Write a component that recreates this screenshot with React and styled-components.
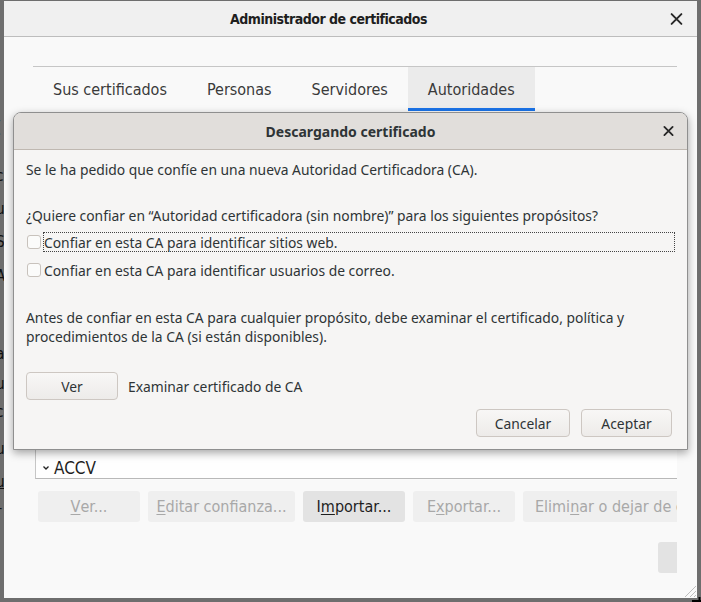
import React from 'react';
import styled, { createGlobalStyle } from 'styled-components';

const GlobalStyle = createGlobalStyle`
  html, body {
    margin: 0;
    padding: 0;
    background: #6e6e6e;
    width: 701px;
    height: 602px;
    overflow: hidden;
  }
`;

const Desktop = styled.div`
  position: relative;
  width: 701px;
  height: 602px;
  padding: 1px 4px 4px 4px;
  box-sizing: border-box;
  font-family: "DejaVu Sans", "Noto Sans", sans-serif;
  font-stretch: condensed;
`;

/* fragments of the dimmed window behind */
const Backdrop = styled.div`
  position: absolute;
  left: -4px;
  top: 0;
  width: 12px;
  color: #111;
  font-size: 15px;
`;

const Fragment = styled.span`
  position: absolute;
  left: 0;
  top: ${(p) => p.$y}px;
  text-decoration: ${(p) => (p.$u ? 'underline' : 'none')};
`;

const Window = styled.div`
  position: relative;
  width: 100%;
  height: 100%;
  background: #f9f9f9;
  display: flex;
  flex-direction: column;
  overflow: hidden;
`;

const TitleBar = styled.div`
  height: 35px;
  flex: none;
  padding-right: 44px;
  background: #f0f0f0;
  border-bottom: 1px solid #bdbdbd;
  display: flex;
  align-items: center;
  justify-content: center;
  position: relative;
  color: #1e1e1e;
  font-weight: bold;
  font-size: 14px;
  letter-spacing: -0.5px;
`;

const CloseButton = styled.div`
  position: absolute;
  right: ${(p) => p.$right}px;
  top: 50%;
  transform: translateY(-50%);
  display: flex;
`;

const Content = styled.div`
  flex: 1;
  margin: 29px 20px 0 29px;
  overflow: hidden;
  display: flex;
  flex-direction: column;
`;

const TabStrip = styled.div`
  display: flex;
  border-top: 1px solid #c6c6c6;
  height: 44px;
  flex: none;
`;

const Tab = styled.div`
  padding: 0 20px;
  display: flex;
  align-items: center;
  font-size: 16px;
  color: #3a3a3a;
  background: ${(p) => (p.$active ? '#ebebeb' : 'transparent')};
  box-shadow: ${(p) => (p.$active ? 'inset 0 -3px 0 #1a73e8' : 'none')};
`;

const Panel = styled.div`
  display: flex;
  flex-direction: column;
  width: 700px;
`;

const TreeBox = styled.div`
  margin: 10px 0 0 2px;
  height: 357px;
  background: #fefefe;
  border-left: 1px solid #c6c6c6;
  border-bottom: 1px solid #b8b8b8;
  display: flex;
  flex-direction: column;
  justify-content: flex-end;
`;

const TreeRow = styled.div`
  display: flex;
  align-items: center;
  height: 20px;
  padding-left: 6px;
  gap: 4px;
  font-size: 17px;
  color: #1e1e1e;
`;

const ActionRow = styled.div`
  display: flex;
  gap: 8px;
  margin: 12px 0 0 5px;
`;

const ActionButton = styled.div`
  flex: none;
  width: ${(p) => (p.$w ? `${p.$w}px` : 'auto')};
  padding: ${(p) => (p.$w ? '0' : '0 12px')};
  height: 31px;
  border-radius: 3px;
  display: flex;
  align-items: center;
  justify-content: center;
  font-size: 16px;
  white-space: nowrap;
  background: ${(p) => (p.$disabled ? '#efefef' : '#e3e3e3')};
  color: ${(p) => (p.$disabled ? '#a8a8a8' : '#1e1e1e')};

  u {
    text-underline-offset: 2px;
  }
`;

const BottomRow = styled.div`
  display: flex;
  margin: 20px 0 0 625px;
`;

const Grip = styled.div`
  position: absolute;
  right: 0;
  bottom: 0;
  display: flex;
`;

const Cursor = styled.div`
  position: absolute;
  right: 0;
  bottom: 0;
  display: flex;
`;

/* modal dialog */
const Dialog = styled.div`
  position: absolute;
  left: 9px;
  top: 111px;
  width: 675px;
  height: 338px;
  box-sizing: border-box;
  border: 1px solid #8f8f8f;
  border-radius: 8px 8px 0 0;
  background: #f6f5f4;
  box-shadow: 0 3px 9px rgba(0, 0, 0, 0.35);
  font-family: "Noto Sans", sans-serif;
  font-stretch: normal;
  color: #2e3436;
  font-size: 13.85px;
  display: flex;
  flex-direction: column;
  overflow: hidden;
`;

const DialogHeader = styled.div`
  height: 36px;
  flex: none;
  background: #e1dedb;
  border-bottom: 1px solid #bfb8b1;
  display: flex;
  align-items: center;
  justify-content: center;
  position: relative;
  font-weight: bold;
  font-size: 14px;
`;

const DialogBody = styled.div`
  padding: 10px 12px 0 12px;
  display: flex;
  flex-direction: column;
  line-height: 19px;
`;

const Text = styled.div`
  margin-top: ${(p) => p.$mt || 0}px;
`;

const CheckRow = styled.div`
  display: flex;
  align-items: center;
  height: 20px;
  margin-top: ${(p) => p.$mt}px;
  padding-left: 1px;
`;

const CheckBox = styled.div`
  width: 12px;
  height: 12px;
  flex: none;
  border: 1px solid #c8c2bc;
  border-radius: 3px;
  background: #fbfbfa;
  margin-right: 2px;
`;

const CheckLabel = styled.div`
  flex: 1;
  height: 18px;
  display: flex;
  align-items: center;
  border: 1px dotted ${(p) => (p.$focus ? '#444' : 'transparent')};
`;

const InfoRow = styled.div`
  display: flex;
  align-items: center;
  gap: 10px;
  margin-top: 26px;
`;

const DialogButton = styled.div`
  width: ${(p) => p.$w}px;
  height: 26px;
  box-sizing: content-box;
  border: 1px solid #cdc7c2;
  border-radius: 4px;
  background: linear-gradient(#f8f7f6, #edebe9);
  display: flex;
  align-items: center;
  justify-content: center;
`;

const ButtonRow = styled.div`
  display: flex;
  justify-content: flex-end;
  gap: 11px;
  margin: 9px 3px 0 0;
`;

const XIcon = ({ size, stroke }) => (
  <svg width={size} height={size} viewBox="0 0 12 12">
    <path d="M1.5 1.5 L10.5 10.5 M10.5 1.5 L1.5 10.5" stroke="#2a2a2a" strokeWidth={stroke} strokeLinecap="round" />
  </svg>
);

const fragments = [
  { y: 118, t: '(' },
  { y: 167, t: 'ci' },
  { y: 200, t: 'u' },
  { y: 233, t: 'SI' },
  { y: 267, t: 'A' },
  { y: 345, t: 'a' },
  { y: 375, t: 'u' },
  { y: 403, t: 'c' },
  { y: 440, t: 'u' },
  { y: 473, t: 'u', u: true },
  { y: 503, t: 'r' },
];

const App = () => {
  return (
    <>
      <GlobalStyle />
      <Desktop>
        <Backdrop>
          {fragments.map((f) => (
            <Fragment key={f.y} $y={f.y} $u={f.u}>{f.t}</Fragment>
          ))}
        </Backdrop>
        <Window>
          <TitleBar>
            Administrador de certificados
            <CloseButton $right={14}>
              <XIcon size={13} stroke={1.8} />
            </CloseButton>
          </TitleBar>
          <Content>
            <TabStrip>
              <Tab>Sus certificados</Tab>
              <Tab>Personas</Tab>
              <Tab>Servidores</Tab>
              <Tab $active>Autoridades</Tab>
            </TabStrip>
            <Panel>
              <TreeBox>
                <TreeRow>
                  <svg width="8" height="8" viewBox="0 0 8 8">
                    <path d="M1.5 2.5 L4 5 L6.5 2.5" stroke="#222" strokeWidth="1.3" fill="none" />
                  </svg>
                  ACCV
                </TreeRow>
              </TreeBox>
              <ActionRow>
                <ActionButton $w={102} $disabled><u>V</u>er...</ActionButton>
                <ActionButton $w={147} $disabled><u>E</u>ditar confianza...</ActionButton>
                <ActionButton $w={102}>I<u>m</u>portar...</ActionButton>
                <ActionButton $w={102} $disabled>E<u>x</u>portar...</ActionButton>
                <ActionButton $disabled>Elimi<u>n</u>ar o dejar de confiar...</ActionButton>
              </ActionRow>
              <BottomRow>
                <ActionButton $w={120}>Aceptar</ActionButton>
              </BottomRow>
            </Panel>
          </Content>
          <Grip>
            <svg width="16" height="16" viewBox="0 0 16 16">
              <path d="M15 4 L4 15 M15 9 L9 15 M15 13 L13 15" stroke="#bdbdbd" strokeWidth="1" />
            </svg>
          </Grip>
          <Dialog>
            <DialogHeader>
              Descargando certificado
              <CloseButton $right={13}>
                <XIcon size={11} stroke={2} />
              </CloseButton>
            </DialogHeader>
            <DialogBody>
              <Text>Se le ha pedido que confíe en una nueva Autoridad Certificadora (CA).</Text>
              <Text $mt={27}>¿Quiere confiar en “Autoridad certificadora (sin nombre)” para los siguientes propósitos?</Text>
              <CheckRow $mt={7}>
                <CheckBox />
                <CheckLabel $focus>Confiar en esta CA para identificar sitios web.</CheckLabel>
              </CheckRow>
              <CheckRow $mt={8}>
                <CheckBox />
                <CheckLabel>Confiar en esta CA para identificar usuarios de correo.</CheckLabel>
              </CheckRow>
              <Text $mt={28}>
                Antes de confiar en esta CA para cualquier propósito, debe examinar el certificado, política y
                <br />
                procedimientos de la CA (si están disponibles).
              </Text>
              <InfoRow>
                <DialogButton $w={90}>Ver</DialogButton>
                Examinar certificado de CA
              </InfoRow>
              <ButtonRow>
                <DialogButton $w={92}>Cancelar</DialogButton>
                <DialogButton $w={89}>Aceptar</DialogButton>
              </ButtonRow>
            </DialogBody>
          </Dialog>
        </Window>
        <Cursor>
          <svg width="9" height="5" viewBox="0 0 9 5">
            <path d="M0 4 H9 M7.5 0 V5" stroke="#000" strokeWidth="2" />
          </svg>
        </Cursor>
      </Desktop>
    </>
  );
};

export default App;
